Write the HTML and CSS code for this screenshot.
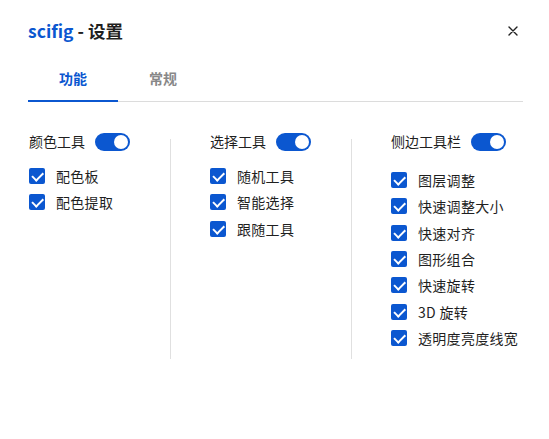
FILE: index.html
```html
<!DOCTYPE html>
<html lang="zh-CN">
<head>
<meta charset="utf-8">
<link rel="stylesheet" href="styles.css">
</head>
<body>
<div class="dialog">
  <header class="head">
    <h1 class="title"><span class="brand">scifig</span> - 设置</h1>
    <button class="close" aria-label="关闭">
      <svg width="10" height="10" viewBox="0 0 10 10"><path d="M1 1L9 9M9 1L1 9" stroke="#222" stroke-width="1.4" stroke-linecap="round"/></svg>
    </button>
  </header>
  <nav class="tabs">
    <div class="tab active">功能</div>
    <div class="tab">常规</div>
  </nav>
  <section class="cols">
    <div class="col">
      <div class="col-head"><span>颜色工具</span><span class="toggle"></span></div>
      <ul class="list">
        <li><span class="cb"></span>配色板</li>
        <li><span class="cb"></span>配色提取</li>
      </ul>
    </div>
    <div class="divider"></div>
    <div class="col">
      <div class="col-head"><span>选择工具</span><span class="toggle"></span></div>
      <ul class="list">
        <li><span class="cb"></span>随机工具</li>
        <li><span class="cb"></span>智能选择</li>
        <li><span class="cb"></span>跟随工具</li>
      </ul>
    </div>
    <div class="divider"></div>
    <div class="col last">
      <div class="col-head"><span>侧边工具栏</span><span class="toggle"></span></div>
      <ul class="list">
        <li><span class="cb"></span>图层调整</li>
        <li><span class="cb"></span>快速调整大小</li>
        <li><span class="cb"></span>快速对齐</li>
        <li><span class="cb"></span>图形组合</li>
        <li><span class="cb"></span>快速旋转</li>
        <li><span class="cb"></span>3D 旋转</li>
        <li><span class="cb"></span>透明度亮度线宽</li>
      </ul>
    </div>
  </section>
</div>
</body>
</html>
```
FILE: styles.css
```css
* { box-sizing: border-box; }
html, body { margin: 0; padding: 0; background: #fff; }
body {
  font-family: "Noto Sans CJK SC", "Noto Sans", sans-serif;
  color: #1f1f1f;
  font-size: 14px;
}
.dialog {
  width: 549px;
  height: 439px;
  padding: 18px 26px 0 28px;
}
.head {
  display: flex;
  align-items: center;
  justify-content: space-between;
  height: 26px;
}
.title {
  margin: 0;
  font-size: 17.5px;
  font-weight: 700;
  line-height: 26px;
  color: #1f1f1f;
}
.brand { color: #0b57d0; }
.close {
  border: 0;
  background: none;
  padding: 0;
  width: 20px;
  height: 20px;
  display: flex;
  align-items: center;
  justify-content: center;
  cursor: pointer;
}
.tabs {
  display: flex;
  margin-top: 21px;
  border-bottom: 1px solid #dcdcdc;
  height: 37px;
}
.tab {
  width: 90px;
  text-align: center;
  font-size: 14px;
  font-weight: 700;
  line-height: 22px;
  padding-top: 2px;
  color: #888;
}
.tab.active {
  color: #0b57d0;
  border-bottom: 2px solid #0b57d0;
  margin-bottom: -1px;
}
.cols {
  display: flex;
  margin-top: 30px;
}
.col { width: 142px; flex: none; }
.col.last { width: auto; padding-bottom: 8px; }
.divider {
  flex: none;
  width: 1px;
  background: #e0e0e0;
  margin-top: 7px;
  margin-right: 38px;
}
.col-head {
  display: flex;
  align-items: center;
  gap: 10px;
  height: 19px;
  white-space: nowrap;
  line-height: 19px;
  padding-left: 1px;
}
.toggle {
  position: relative;
  width: 35px;
  height: 18px;
  border-radius: 9px;
  background: #0b57d0;
  flex: none;
}
.toggle::after {
  content: "";
  position: absolute;
  right: 2px;
  top: 2px;
  width: 14px;
  height: 14px;
  border-radius: 50%;
  background: #fff;
}
.list {
  list-style: none;
  margin: 12px 0 0;
  padding: 0;
}
.last .list { margin-top: 16px; }
.list li {
  display: flex;
  align-items: center;
  height: 26.33px;
  white-space: nowrap;
  padding-left: 1px;
  letter-spacing: 0.3px;
}
.cb {
  width: 16px;
  height: 16px;
  border-radius: 2px;
  background: #0b57d0;
  margin-right: 11px;
  flex: none;
  position: relative;
}
.cb::after {
  content: "";
  position: absolute;
  left: 3px;
  top: 4px;
  width: 9px;
  height: 4.5px;
  border-left: 2px solid #fff;
  border-bottom: 2px solid #fff;
  transform: rotate(-45deg);
}
```
